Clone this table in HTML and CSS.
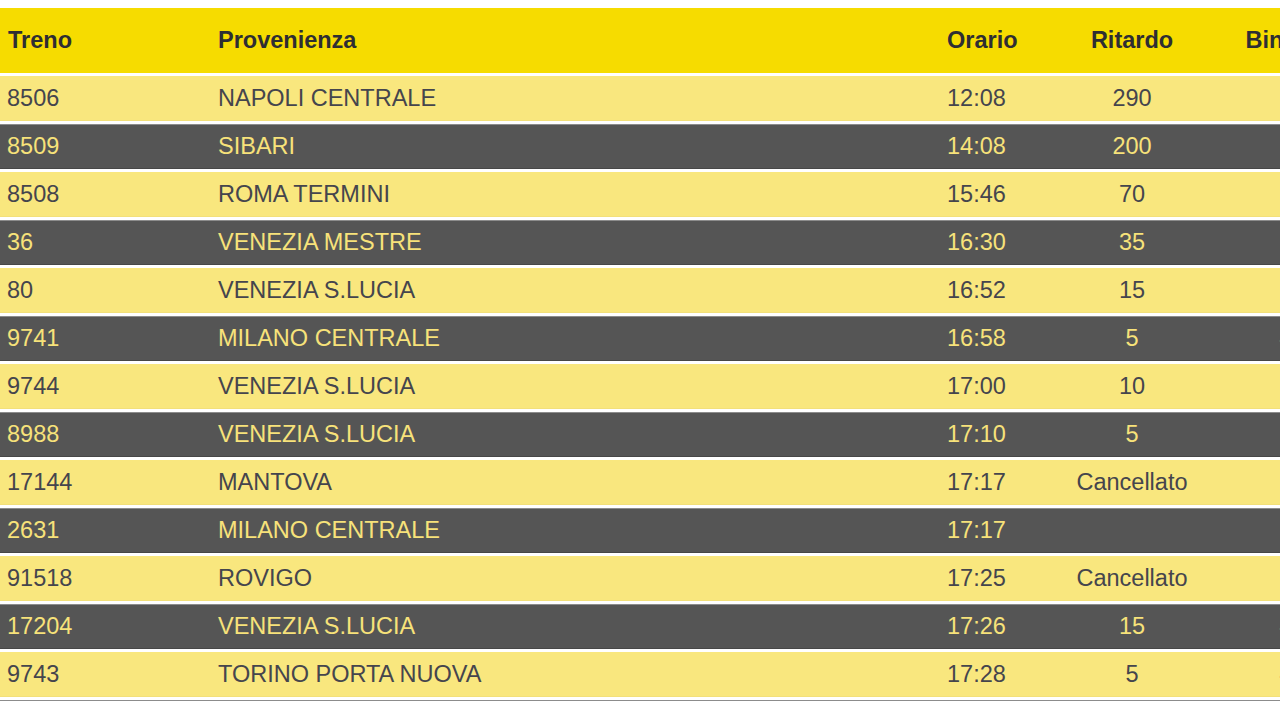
FILE: index.html
```html
<!DOCTYPE html>
<html lang="it">
<head>
<meta charset="utf-8">
<title>Arrivi</title>
<link rel="stylesheet" href="styles.css">
</head>
<body>
<table class="board">
  <colgroup>
    <col class="c-treno"><col class="c-prov"><col class="c-ora"><col class="c-rit"><col class="c-bin">
  </colgroup>
  <thead>
    <tr class="head">
      <th class="left">Treno</th>
      <th class="left">Provenienza</th>
      <th class="left">Orario</th>
      <th class="center">Ritardo</th>
      <th class="center">Binario</th>
    </tr>
  </thead>
  <tbody>
    <tr class="light"><td>8506</td><td>NAPOLI CENTRALE</td><td>12:08</td><td class="center">290</td><td class="center">1</td></tr>
    <tr class="dark"><td>8509</td><td>SIBARI</td><td>14:08</td><td class="center">200</td><td class="center">1</td></tr>
    <tr class="light"><td>8508</td><td>ROMA TERMINI</td><td>15:46</td><td class="center">70</td><td class="center">1</td></tr>
    <tr class="dark"><td>36</td><td>VENEZIA MESTRE</td><td>16:30</td><td class="center">35</td><td class="center">6</td></tr>
    <tr class="light"><td>80</td><td>VENEZIA S.LUCIA</td><td>16:52</td><td class="center">15</td><td class="center">7</td></tr>
    <tr class="dark"><td>9741</td><td>MILANO CENTRALE</td><td>16:58</td><td class="center">5</td><td class="center">4</td></tr>
    <tr class="light"><td>9744</td><td>VENEZIA S.LUCIA</td><td>17:00</td><td class="center">10</td><td class="center">6</td></tr>
    <tr class="dark"><td>8988</td><td>VENEZIA S.LUCIA</td><td>17:10</td><td class="center">5</td><td class="center">6</td></tr>
    <tr class="light"><td>17144</td><td>MANTOVA</td><td>17:17</td><td class="center">Cancellato</td><td class="center">1</td></tr>
    <tr class="dark"><td>2631</td><td>MILANO CENTRALE</td><td>17:17</td><td class="center"></td><td class="center">1</td></tr>
    <tr class="light"><td>91518</td><td>ROVIGO</td><td>17:25</td><td class="center">Cancellato</td><td class="center">1</td></tr>
    <tr class="dark"><td>17204</td><td>VENEZIA S.LUCIA</td><td>17:26</td><td class="center">15</td><td class="center">4</td></tr>
    <tr class="light"><td>9743</td><td>TORINO PORTA NUOVA</td><td>17:28</td><td class="center">5</td><td class="center">4</td></tr>
    <tr class="dark"><td>2633</td><td>MILANO CENTRALE</td><td>17:35</td><td class="center"></td><td class="center">5</td></tr>
  </tbody>
</table>
</body>
</html>
```

FILE: styles.css
```css
html, body {
  margin: 0;
  padding: 0;
  overflow: hidden;
  background: #ffffff;
}

body {
  font-family: "Liberation Sans", Arial, sans-serif;
  font-size: 23.5px;
}

.board {
  margin-top: 5px;
  border-collapse: separate;
  border-spacing: 0 3px;
  table-layout: fixed;
  width: 1368px;
}

.c-treno { width: 211px; }
.c-prov { width: 729px; }
.c-ora { width: 120px; }
.c-rit { width: 144px; }
.c-bin { width: 164px; }

.board th,
.board td {
  padding: 0 7px;
  white-space: nowrap;
  overflow: hidden;
}

.board th {
  height: 65px;
  box-sizing: border-box;
  background: #f6dc00;
  color: #2e2e33;
  font-weight: bold;
}

.board th:first-child {
  padding-left: 8px;
}

.left { text-align: left; }

.board td {
  height: 45px;
  box-sizing: border-box;
}

.light td {
  background: #f9e77e;
  color: #45454d;
  border-top: 1px solid #f9e77e;
  border-bottom: 1px solid #f3e07a;
}

.dark td {
  background: #555555;
  color: #f7e27a;
  border-top: 1px solid #8c8c8c;
  border-bottom: 1px solid #474747;
}

.board td.center,
.board th.center {
  text-align: center;
}
```
